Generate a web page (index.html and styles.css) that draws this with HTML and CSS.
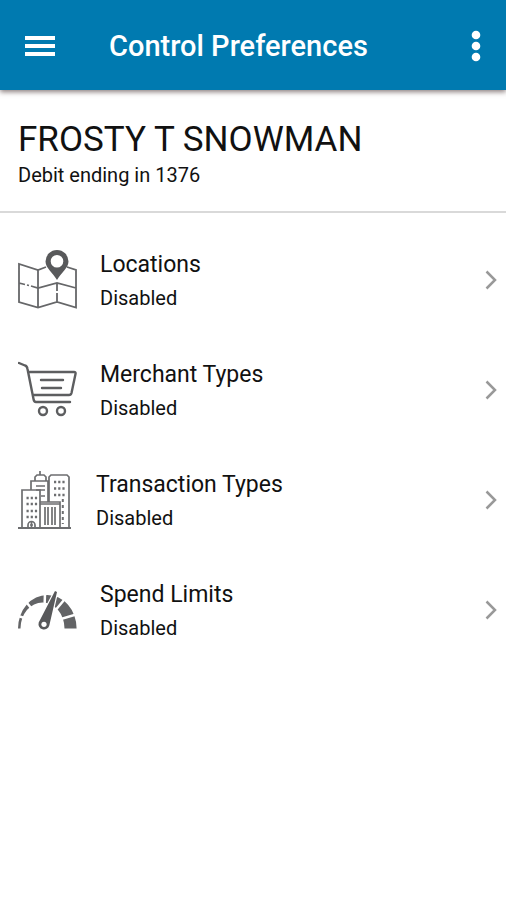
FILE: index.html
```
<!DOCTYPE html>
<html lang="en">
<head>
    <meta charset="UTF-8">
    <meta name="viewport" content="width=device-width, initial-scale=1.0">
    <title>Control Preferences</title>
    <link rel="stylesheet" href="styles.css">
</head>
<body>
    <header class="app-bar">
        <button class="icon-button" type="button" aria-label="Menu">
            <svg width="30" height="22" viewBox="0 0 30 22" fill="#fff">
                <rect y="1" width="30" height="4"/>
                <rect y="9" width="30" height="4"/>
                <rect y="17" width="30" height="4"/>
            </svg>
        </button>
        <h1>Control Preferences</h1>
        <button class="icon-button" type="button" aria-label="More options">
            <svg width="10" height="32" viewBox="0 0 10 32" fill="#fff">
                <circle cx="5" cy="5" r="4.3"/>
                <circle cx="5" cy="16" r="4.3"/>
                <circle cx="5" cy="27" r="4.3"/>
            </svg>
        </button>
    </header>

    <section class="card-holder">
        <h2>FROSTY T SNOWMAN</h2>
        <p>Debit ending in 1376</p>
    </section>

    <main>
        <ul class="controls">
            <li>
                <a class="control" href="#locations">
                    <svg width="60" height="60" viewBox="0 0 60 60" fill="none" stroke="#666769" stroke-width="1.8">
                        <path d="M28 17 20 20 1 14V52L20 57.5 39 52 58 57.5V20L49 17M20 20V57.5M1 33 7 34.5M9 35 11 35.5M13 36 20 38 39 33 58 38M39 34V41M39 43V52"/>
                        <path fill="#58595b" fill-rule="evenodd" stroke="none" d="M39 30C35 23 27.5 18 27.5 11.5A11.5 11.5 0 0 1 50.5 11.5C50.5 18 43 23 39 30ZM39 5A6.3 6.3 0 1 0 39 17.6 6.3 6.3 0 0 0 39 5Z"/>
                    </svg>
                    <span class="control-text">
                        <span class="control-name">Locations</span>
                        <span class="control-status">Disabled</span>
                    </span>
                    <svg class="chevron" width="12" height="20" viewBox="0 0 12 20"><path d="M1.5 1.5 10 10 1.5 18.5"/></svg>
                </a>
            </li>
            <li>
                <a class="control" href="#merchant-types">
                    <svg width="60" height="60" viewBox="0 0 60 60" fill="none" stroke="#5d5e60" stroke-width="2.4" stroke-linecap="round" stroke-linejoin="round">
                        <path d="M1 3 7 5.5Q9 6 9.5 9L15.5 39Q16 42 18 42H52M10 12H56Q58 12 57.5 14L53.5 33Q53 35 51 35H15"/>
                        <path d="M23 20H45M24 28H43"/>
                        <circle cx="25" cy="51" r="4"/>
                        <circle cx="43" cy="51" r="4"/>
                    </svg>
                    <span class="control-text">
                        <span class="control-name">Merchant Types</span>
                        <span class="control-status">Disabled</span>
                    </span>
                    <svg class="chevron" width="12" height="20" viewBox="0 0 12 20"><path d="M1.5 1.5 10 10 1.5 18.5"/></svg>
                </a>
            </li>
            <li>
                <a class="control" href="#transaction-types">
                    <svg width="56" height="60" viewBox="0 0 56 60" fill="none" stroke="#6d6e70" stroke-width="1.7">
                        <path d="M0 58H53" stroke-width="2"/>
                        <path d="M4 58V20H22V58M13 20V11H30V32M17 11V7L19 5H26L28 7V11M22 1V5M31 32V7L33 5H49L51 7V58M22 32H42V58M22 34H42"/>
                        <path d="M18 16H27M18 20H27M23 26H27"/>
                        <path d="M8.5 28H20M8.5 34H20M8.5 41H20M8.5 47H20M36 12H48M36 18.5H48M36 25H48" stroke-width="2.6" stroke-dasharray="2.2 2"/>
                        <path d="M44.8 29V54" stroke-width="2" stroke-dasharray="3 3"/>
                        <path d="M27 37V55M30 37V55M34 37V55M37 37V55"/>
                        <path d="M10 58V55A3.5 3.5 0 0 1 17 55V58M12 55H15M13.5 52V58"/>
                    </svg>
                    <span class="control-text">
                        <span class="control-name">Transaction Types</span>
                        <span class="control-status">Disabled</span>
                    </span>
                    <svg class="chevron" width="12" height="20" viewBox="0 0 12 20"><path d="M1.5 1.5 10 10 1.5 18.5"/></svg>
                </a>
            </li>
            <li>
                <a class="control" href="#spend-limits">
                    <svg width="60" height="60" viewBox="0 0 60 60">
                        <path fill="#636466" d="M0 48.5A29.3 33.5 0 0 1 58.6 48.5H46.5A22 26 0 0 0 2.5 48.5Z"/>
                        <path fill="none" stroke="#fff" stroke-width="2.5" d="M26 44 0 36M26 44 9 23M26 44 27 13M26 44 46 20M26 44 60 34"/>
                        <path fill="#58595b" stroke="#fff" stroke-width="2.4" paint-order="stroke" stroke-linejoin="round" d="M37 11 39 12 31.3 45.5A5.4 5.4 0 1 1 20.7 42.5Z"/>
                        <circle cx="26" cy="44.3" r="2.6" fill="#fff"/>
                    </svg>
                    <span class="control-text">
                        <span class="control-name">Spend Limits</span>
                        <span class="control-status">Disabled</span>
                    </span>
                    <svg class="chevron" width="12" height="20" viewBox="0 0 12 20"><path d="M1.5 1.5 10 10 1.5 18.5"/></svg>
                </a>
            </li>
        </ul>
    </main>
</body>
</html>
```
FILE: styles.css
```
body {
    margin: 0;
    background-color: #fff;
    color: #111;
    font-family: Roboto, sans-serif;
}
h1, h2, p, ul {
    margin: 0;
    padding: 0;
}
.app-bar {
    display: flex;
    align-items: center;
    padding: 22px 17px 20px;
    background-color: #007ab0;
    box-shadow: 0 2px 5px rgba(60, 40, 40, 0.6);
    color: white;
}
.app-bar h1 {
    flex: 1;
    margin-left: 46px;
    font-size: 29px;
    line-height: 36px;
    font-weight: 500;
}
.icon-button {
    display: flex;
    padding: 8px;
    border: none;
    background: none;
    cursor: pointer;
}
.card-holder {
    padding: 29px 18px 22px;
    border-bottom: 2px solid #d9d9d9;
}
.card-holder h2 {
    font-size: 35px;
    line-height: 42px;
    font-weight: 400;
}
.card-holder p {
    font-size: 20px;
    line-height: 28px;
}
.controls {
    padding-top: 12px;
    list-style: none;
}
.control {
    display: flex;
    align-items: center;
    gap: 22px;
    padding: 23px 9px 23px 18px;
    color: inherit;
    text-decoration: none;
}
.control-text {
    display: flex;
    flex: 1;
    flex-direction: column;
    gap: 2px;
}
.control-name {
    font-size: 23px;
    line-height: 34px;
}
.control-status {
    font-size: 20px;
    line-height: 28px;
}
.chevron {
    fill: none;
    stroke: #999;
    stroke-width: 2.5;
}
```
